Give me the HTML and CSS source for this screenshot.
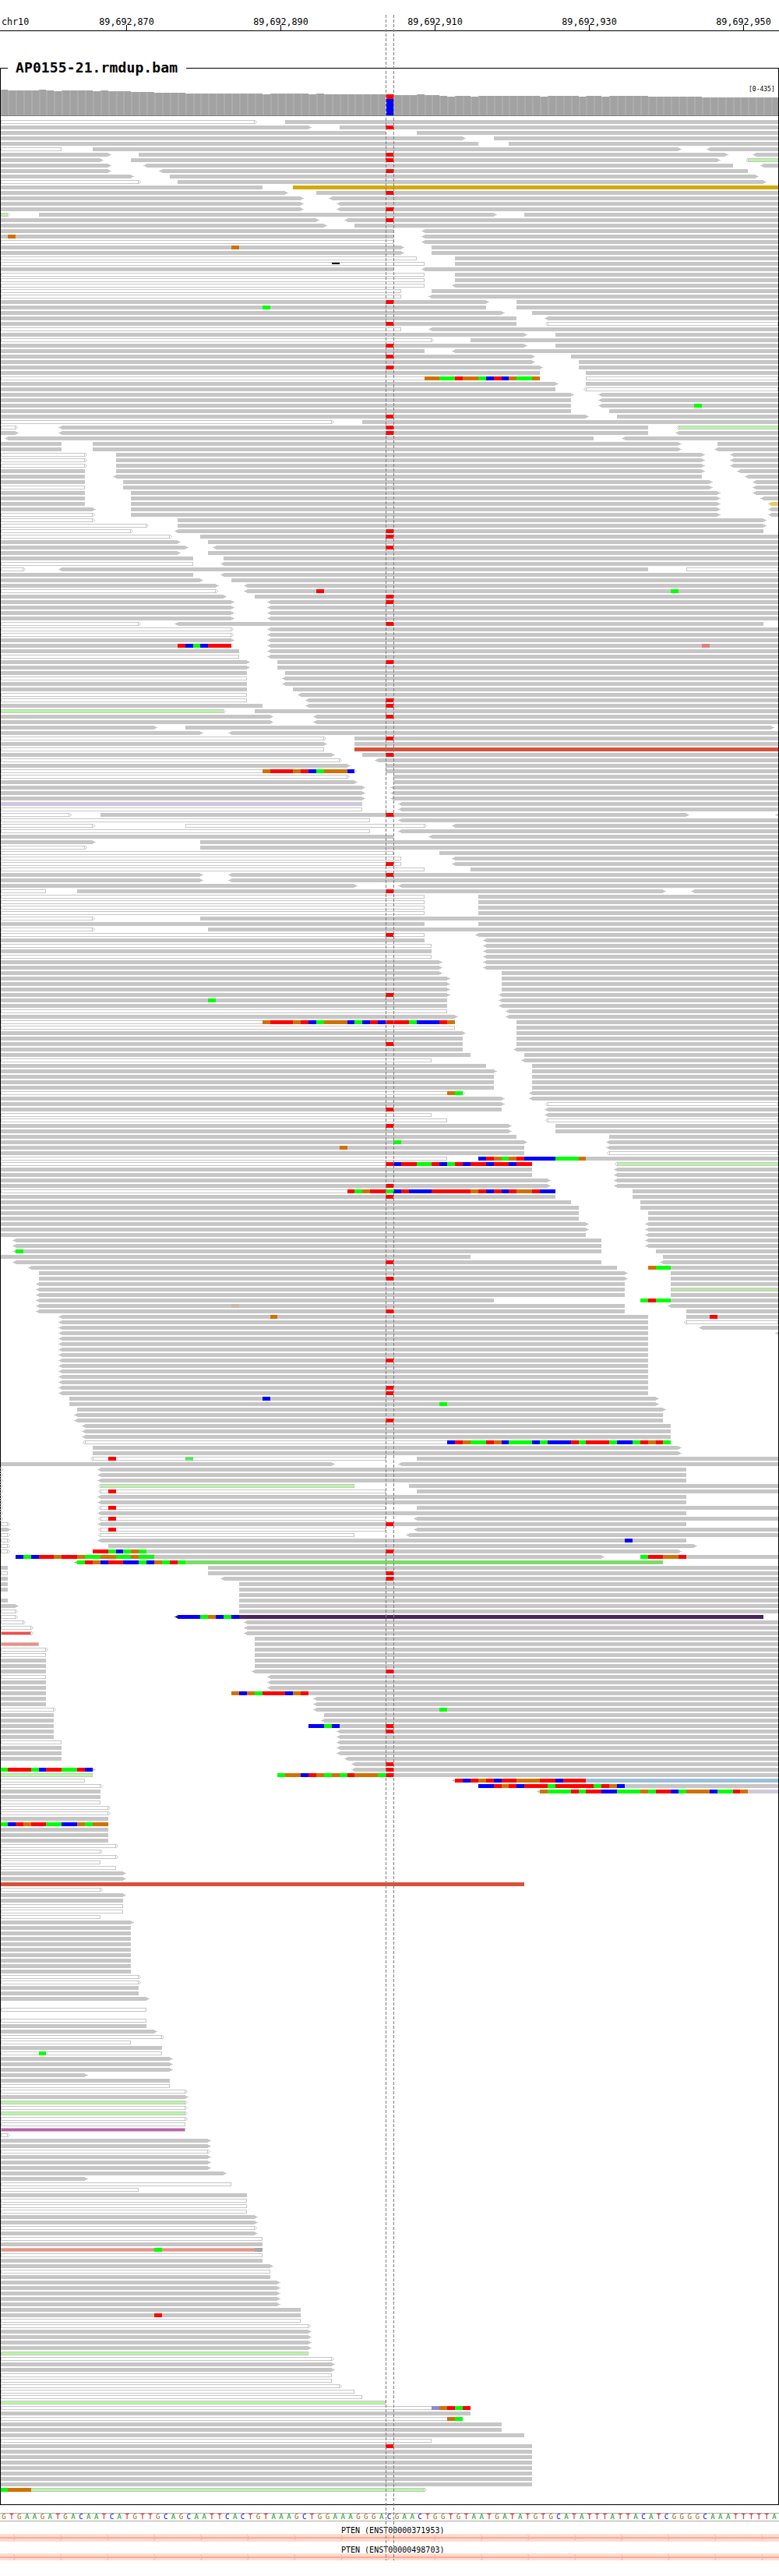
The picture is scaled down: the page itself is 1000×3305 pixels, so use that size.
FILE: index.html
```html
<!DOCTYPE html>
<html lang="en">
<head>
  <meta charset="UTF-8" />
  <title>IGV snapshot chr10</title>
  <link rel="stylesheet" href="styles.css">
</head>
<body>
  <div class="igv">
    <svg class="ruler" width="1000" height="40">
      <text x="2" y="32">chr10</text>
      <text class="pos" x="162.5" y="32">89,692,870</text>
      <text class="pos" x="360.5" y="32">89,692,890</text>
      <text class="pos" x="558.5" y="32">89,692,910</text>
      <text class="pos" x="756.5" y="32">89,692,930</text>
      <text class="pos" x="954.5" y="32">89,692,950</text>
      <path d="M162.5 32V39M360.5 32V39M558.5 32V39M756.5 32V39M954.5 32V39" stroke="#000" />
      <rect x="0" y="39" width="1000" height="1" />
    </svg>

    <div class="track">
      <div class="track-name">AP0155-21.rmdup.bam</div>
      <svg id="reads" class="reads" width="1000" height="3125"></svg>
    </div>

    <div id="seq" class="seq"></div>

    <div class="gene">
      <div class="gene-name">PTEN (ENST00000371953)</div>
      <svg class="band" width="1000" height="10">
        <defs>
          <pattern id="strand" width="60" height="10" patternUnits="userSpaceOnUse" x="0">
            <path d="M17.5 1.5L20 5L17.5 8.5" fill="none" stroke="#ffa898" />
          </pattern>
        </defs>
        <rect width="1000" height="10" fill="#ffdccf" />
        <rect y="4" width="1000" height="2" fill="#ffa898" />
        <rect width="1000" height="10" fill="url(#strand)" />
      </svg>
    </div>
    <div class="gene">
      <div class="gene-name">PTEN (ENST00000498703)</div>
      <svg class="band" width="1000" height="9">
        <rect width="1000" height="9" fill="#ffdccf" />
        <rect y="4" width="1000" height="2" fill="#ffa898" />
        <rect width="1000" height="9" fill="url(#strand)" />
      </svg>
    </div>

    <svg class="roi" width="1000" height="3305">
      <path d="M495.5 19V3285M505.5 19V3285" />
    </svg>
  </div>

  <script src="reads.js"></script>
</body>
</html>
```

FILE: styles.css
```css
html, body {
  margin: 0;
  background: #fff;
}
.igv {
  position: relative;
  width: 1000px;
  height: 3305px;
  overflow: hidden;
  font-family: "DejaVu Sans Mono", monospace;
}
svg {
  display: block;
}
.ruler text {
  font-size: 11.7px;
}
.ruler .pos {
  text-anchor: middle;
}
.track {
  position: relative;
  margin-top: 47px;
  height: 3125px;
  border: 1px solid #000;
}
.track-name {
  position: absolute;
  left: 9px;
  top: -12px;
  padding: 0 11px 0 10px;
  background: #fff;
  font-size: 18px;
  font-weight: bold;
  letter-spacing: 0.12px;
  line-height: 22px;
}
.reads {
  margin-left: -1px;
  shape-rendering: crispEdges;
}
.reads text {
  font-size: 8px;
  shape-rendering: auto;
}
.seq {
  display: grid;
  grid-template-columns: repeat(101, 9.9px);
  margin-top: 10px;
  height: 9px;
  border-top: 1px solid #aaa;
  border-bottom: 1px solid #aaa;
  font-size: 9px;
  line-height: 9px;
  text-align: center;
}
.base-A { color: #009600; }
.base-C { color: #0000c8; }
.base-G { color: #a0640a; }
.base-T { color: #dc0000; }
.gene {
  font-size: 10px;
  line-height: 12px;
}
.gene-name {
  margin-top: 6px;
  height: 10px;
  padding-left: 438px;
}
.gene + .gene .gene-name {
  margin-top: 5px;
}
.roi {
  position: absolute;
  left: 0;
  top: 0;
  pointer-events: none;
}
.roi path {
  stroke: #808080;
  stroke-dasharray: 4 2;
  fill: none;
}
```

FILE: reads.js
```js
// one line per alignment row, top to bottom, positions are base numbers in the window
// "<s-e>x" read (arrow on strand side, x = style letter), "50GAT" mismatch bases, "*" = 50T
const ROWS = `
0-33>o 37-101
0-40> 44-101 *
0-50 54-101
0-60> 64-101
0-62 66-101
0-8o 12-88> <92-101
0-14> 18-94> <98-101 *
0-13> 17-93> <97-101p *
0-14> <19-95 <99-101
0-14> <21-97 *
0-17> 22-98>
0-18>o 23-99>
0-34 38-101y
0-37> 41-101 *
0-39> <43-101
0-39> <44-101
0-39> <44-101 *
0-1>p 5-64> 68-101
0-41> <45-101 *
0-42> 46-101
0-51 <55-101
0-51 <55-101 1G
0-51o <55-101
0-52> 56-101 30G
0-52> 56-101
0-54o 59-101
0-55o 59-101 43D
0-51 <55-101
0-55o 59-101
0-55o 59-101
0-55o <59-101
0-52o 56-101
0-52o <56-101
0-63> 67-101 *
0-63 67-101 34A
0-65> 69-101
0-67 <71-101
0-67 <71-101o *
0-52o <56-101
0-68> 72-101
0-56>o 61-101
0-68> 72-101 *
0-55 <59-101
0-69> 74-101 *
0-69> 75-101
0-70> 75-101 *
0-70 76-101
0-70o 76-101o 55GGAATGGACTCGAAG
0-72> 76-101
0-72 <76-101o
0-74> <78-101
0-74 <78-101
0-74 <78-101 90A
0-74 79-101
0-76> 80-101 *
0-43>o 47-101
0-2>o <8-84 <88-101p *
0-2> <8-84 <88-101 *
<1-77 <81-101
0-8 12-88> 93-101
0-8 12-88> <93-101
0-11>o 15-91> <95-101
0-11>o 15-91> <95-101
0-11>o 15-91> <95-101
0-11 15-91> <96-101
0-11 <15-91 <97-101
0-11 16-92> <98-101
0-11o 16-92> <98-101
0-11 17-93> <98-101
0-11 17-93> <99-101
0-11 17-93> <100-101h
0-12> 17-93> <100-101
0-12>o 17-93> <100-101
0-12>o 23-99>
0-19>o 23-99>
0-17>o <23-99 *
0-22>o 26-101 *
0-23> 27-101
0-24> <28-101 *
0-23> 27-101
0-25 29-101
0-25o <29-101
0-3>o <8-84 89-101o
0-25 <29-101
0-26> 30-101
0-28> <32-101
0-28>o <32-101 41T 87A
0-29> 33-101 *
0-30> <35-101 *
0-30> <35-101
0-30> <35-101
0-30> <35-101
0-18>o <23-99 *
0-30>o <35-101
0-30>o <35-101
0-30> <35-101
0-30 23TCACTTT <35-101 91W
0-31 <35-101
0-31o <35-101
0-32> 36-101 *
0-32> 36-101
0-32 37-101
0-32o <37-101
0-32 <37-101
0-32 38-101
0-32o <39-101
0-32o <40-101 *
0-34 <40-101 *
0-29>p 33-101
0-35> <41-101 *
0-35> <41-101
0-20> 24-100>
0-26> <30-101
0-42>o 46-101 *
0-42> 46-101
0-42o 46-101r
0-43> 47-101 *
0-44>o <49-101
0-45> 50-101
0-46>o 34GTTTGTCAGGGC 50-101
0-45>o 51-101
0-46> 51-101
0-47> <51-101
0-47> <51-101
0-47> <51-101
0-47l <52-101
0-47o <52-101
0-9>o 13-89> <101-101 *
0-48o <52-101
0-12>o 24-55>o <59-101
0-48o <52-101
0-51 <56-101
0-12> 26-101
0-11>o 26-101
0-51o 57-101
0-52o <59-101
0-52o <59-101 *
0-55o 61-101
0-26> <30-101 *
0-26> <30-101
0-46> <52-101
0-6o 10-86> <90-101 *
0-55o 62-101
0-55o 62-101
0-55o 62-101
0-55o 62-101
0-12>o 26-101
0-55 62-101
0-12>o 27-101
0-55o <62-101 *
0-55 <63-101
0-56o <63-101
0-56 <63-101
0-56o <63-101
0-57> <63-101
0-57> <63-101
0-57> 65-101
0-58> 65-101
0-58> 65-101
0-58> 65-101
0-58> <65-101 *
0-58 <65-101 27A
0-58 <65-101
0-58o <66-101
0-59> <66-101
0-59o 34GTTTGTCAGGGCACTCTTTACCCTG 67-101
0-59o 67-101
0-60> 67-101
0-60 67-101
0-60 67-101 *
0-60 <67-101
0-61 68-101
0-56o <68-101
0-63 69-101
0-64> 69-101
0-64 69-101
0-64 69-101
0-64 69-101
0-60>o 58GA <69-101
0-65> <69-101
0-65> <71-101o
0-65 <71-101 *
0-56o <71-101
0-58o <71-101o
0-66> 72-101 *
0-66> 72-101
0-67 79-101
0-68> <79-101 51A
0-68 <79-101 44G
0-68 <79-101o
0-58o 62-101 62CTGAGTCCCCAAAG
0-69o 50TCTTAATCATCTTCTTCTT <80-101p
0-69 <80-101
0-69 <80-101
0-71> <80-101
0-71> <80-101 *
0-72o 45TAGTTACTCCCTTTTTGTCTCTGGTCC 82-101
0-72 * 82-101
0-74 83-101
0-75 83-101
0-75 84-101
0-75 84-101
0-76> <84-101
0-76> <84-101
0-76 <84-101
<2-78 <84-101
<2-78 <84-101
<2-78 85-101 2A
0-61 86-101
<2-78 <86-101 *
<4-80 84-101 84GAA
5-81> 87-101
5-81> 87-101 *
<5-81 87-101
<5-81 87-101d
<5-81 87-101
<5-64 83-101 83ATAA
<5-81 <87-101 30Y
<5-81 89-101 *
<8-84 89-101 35G 92T
<8-84 <89-101o
<8-84 <91-101
<8-84 <101-101
<8-84
<8-84
<8-84
<8-84
<8-84 *
<8-84
<8-84
<8-84
<8-84
<8-84 *
<8-84 *
9-85> 34C
9-85> 57A
10-86>
<10-86
<10-86 *
<11-87
<11-87
<11-87
<11-87o 58CTGAATGCAAACACCCTATTTACCATGTA
12-88>
12-88>
<12-50o 14T 24E 54-101
0-43> <52-101
0-0>o <13-89
0-0>o <13-89
0-0>o <13-89
0-0>o <13-46p 53-101
0-0>o <13-50o 14T 54-101
0-0>o <13-89
0-0>o <13-89
0-0>o <13-50o 14T 54-101
0-0>o <13-89
0-0>o <13-50o 14T <54-101
0-1>o <13-89 *
0-1> <13-50o 14T <54-101
0-1>o <13-46o <53-101
0-1>o <13-89 81C
0-1>o 14-90>
0-1>o 12-88> 12TTACAGA *
2-78> 2CACTTGTTGAAGGAAGAA 83-101 83ATTGGT
<10-86e 10ATGCTTCCACGATA
0-1 27-101
0-1o 27-101 *
0-1 <29-101 *
0-1 31-101
0-1 31-101
31-101
0-1 31-101
0-2> 31-101
0-2>o 31-101
0-2>o <23-99u 23CCCAGCAC
0-3>o <32-101
0-4>o <32-101
0-4>f <32-101
33-101
0-5s 33-101
0-6>o 33-101
0-6o 33-101
0-6 33-101
0-6 33-101
0-6 <33-101 *
0-6o <35-101
0-6 <35-101
0-6 <35-101
0-6 30-101 30GCGATTTCGT
0-6 <41-101
0-6 <41-101
0-7>o <41-101 57A
0-7 42-101
0-7 <42-101
0-7 40-101 40CCAC *
0-7 <44-101 *
0-7 <44-101
0-8o <44-101
0-8 <44-101
0-8 <44-101
0-8 <45-101
<46-101 *
0-12> 0ATTTACTTAATC <46-101 *
0-12p 36-101 36AGGCTGAGATGGGAT
0-11o <59-76 76-101k 59TCTGTCTTGGGTTCTTT
0-13>o 62-101 62CCTGTCTTTATTTTTATGC
0-13 <70-97 97-101l 70GAAATATTCCAAAGATTCAGGGCAATG
0-13
0-13o
0-14>o
0-14>o
0-14
0-14 0ACTGTTAACCGAGG
0-14
0-14
0-14
0-15>o
0-13>o
0-15>o
0-13o
0-15o
0-16>
0-16>
0-68r
0-13>o
0-16>
0-16
0-16o
0-16o
0-13o
0-17>
0-17
0-17
0-17
0-17
0-17
0-17
0-17
0-17
0-17
0-18>o
0-18>o
0-18
0-18
0-19>

0-19o

0-19o
0-19
0-20>
0-21>o
0-17o
0-21
0-21o 5A
0-22>
0-22>
0-22>
0-11>
0-22
0-22o
0-24>o
0-24>
0-24>p
0-24>o
0-24>p
0-24>o
0-24o
0-24m
0-1>o
0-27>
0-27>
0-27>o
0-27>
0-27>
0-27>
0-29>
0-11>
0-30o
0-18o
0-32
0-32o
0-32o
0-32o
0-33>
0-33>
0-33>o
0-33>
0-34o
0-34
0-34s 20A 33X
0-34o
0-34
0-35>
0-35o
0-35
0-36>
0-36>
0-36>
0-36>
0-36>
0-39
0-39 20T
0-39o
0-40>o
0-40>
0-40>
0-40>
0-40>
0-40p
0-43>o
0-43>
0-43>
0-43o
0-43o
0-44>o
0-46o
0-47o
0-50p
0-61o 56VGTAT
0-61
0-60o 58GA
0-65
0-65
0-68
0-56o
0-69 *
0-69
0-69
0-69
0-69
0-69
0-69
0-69
0-55>p 0AGGG
`.split("\n").slice(1, -1);

const COVERAGE = [[115,1],[116,4],[115,1],[116,1],[117,1],[116,4],[117,1],[116,1],[117,3],[118,3],[119,4],
  [120,10],[121,1],[120,5],[121,1],[120,1],[121,9],[122,3],[121,1],[122,2],[123,1],[124,1],[123,2],[124,1],
  [123,8],[124,1],[123,4],[124,1],[123,2],[124,1],[123,5],[124,7],[125,10]];

const BASE = 9.9, TOP = 88, ROW_H = 7;

const READ_STYLE = {
  "": { fill: "#c6c6c6" },
  o: { fill: "#fff", stroke: "#c6c6c6" },
  p: { fill: "#b6f7a2", stroke: "#c6c6c6" },
  d: { fill: "#bfe3a5", stroke: "#c6c6c6" },
  s: { fill: "#ff8a78", stroke: "#c6c6c6" },
  f: { fill: "#ff4848", stroke: "#c6c6c6" },
  m: { fill: "#c85ab4", stroke: "#c6c6c6" },
  y: { fill: "#d4a900" },
  r: { fill: "#d8513a" },
  u: { fill: "#47245f" },
  l: { fill: "#cfc8dd" },
  k: { fill: "#9bbfd8" },
  e: { fill: "#7bdc6a" },
  h: { fill: "#e8c86a" },
};

const BASE_COLOR = {
  A: "#00ff00", C: "#0000ff", G: "#d17105", T: "#ff0000",
  V: "#8a8ad8", W: "#e07f7f", X: "#a8a8a8", Y: "#ccb8a8", E: "#66e066",
};

function px(k) {
  return Math.min(999, Math.max(1, Math.round(k * BASE)));
}

function rect(x, y, w, h, fill, extra) {
  return `<rect x="${x}" y="${y}" width="${w}" height="${h}" fill="${fill}"${extra || ""}/>`;
}

function drawRead(m, y) {
  const style = READ_STYLE[m[5]];
  const x1 = px(+m[2]), x2 = px(+m[3]);
  const line = style.stroke ? style.stroke : style.fill;
  let out = "";

  if (x2 > x1) {
    if (style.stroke) {
      out += rect(x1 + 0.5, y + 0.5, x2 - x1 - 1, 4, style.fill, ` stroke="${style.stroke}"`);
    } else {
      out += rect(x1, y, x2 - x1, 5, style.fill);
    }
  }
  if (m[4] && x2 < 999) {
    out += style.stroke
      ? `<path d="M${x2 - 0.5} ${y}L${x2 + 2.5} ${y + 2.5}L${x2 - 0.5} ${y + 5}" fill="none" stroke="${line}"/>`
      : rect(x2, y + 1, 2, 3, line) + rect(x2 + 2, y + 2, 2, 1, line);
  }
  if (m[1] && x1 > 1) {
    out += style.stroke
      ? `<path d="M${x1 + 0.5} ${y}L${x1 - 2.5} ${y + 2.5}L${x1 + 0.5} ${y + 5}" fill="none" stroke="${line}"/>`
      : rect(x1 - 2, y + 1, 2, 3, line) + rect(x1 - 4, y + 2, 2, 1, line);
  }
  return out;
}

function drawMismatches(start, bases, y) {
  let out = "";
  [...bases].forEach((b, i) => {
    const x1 = px(start + i), x2 = px(start + i + 1);
    out += b === "D" ? rect(x1, y + 1, x2 - x1, 2, "#000") : rect(x1, y, x2 - x1, 5, BASE_COLOR[b]);
  });
  return out;
}

function drawCoverage() {
  let out = "", k = 0;
  COVERAGE.forEach(([top, n]) => {
    for (let i = 0; i < n; i++, k++) {
      const x1 = px(k), x2 = px(k + 1), y = top - TOP;
      if (k === 50) {
        out += rect(x1 + 1, y, x2 - x1 - 1, 6, "#ff0000") + rect(x1 + 1, y + 6, x2 - x1 - 1, 148 - top - 6, "#0000ff");
      } else {
        out += rect(x1, y, x2 - x1, 148 - top, "#a2a2a2") + rect(x1, y, 2, 148 - top, "#acacac");
      }
    }
  });
  out += rect(1, 148 - TOP, 998, 1, "#808080");
  out += `<text x="961" y="${117 - TOP}">[0-435]</text>`;
  return out;
}

function drawRows() {
  let reads = "", marks = "";
  ROWS.forEach((row, n) => {
    const y = 154 + n * ROW_H - TOP;
    row.split(" ").filter(Boolean).forEach(tok => {
      if (tok === "*") { marks += drawMismatches(50, "T", y); return; }
      const read = tok.match(/^(<?)(\d+)-(\d+)(>?)([a-z]?)$/);
      if (read) { reads += drawRead(read, y); return; }
      const mm = tok.match(/^(\d+)([A-Z]+)$/);
      marks += drawMismatches(+mm[1], mm[2], y);
    });
  });
  return reads + marks;
}

function drawSequence() {
  const seq = "GTGAAGATGACAATCATGTTGCAGCAATTCACTGTAAAGCTGGAAAGGGACGAACTGGTGTAATGATATGTGCATATTTATTACATCGGGGCAAATTTTTA";
  document.getElementById("seq").innerHTML = [...seq].map(b => `<span class="base-${b}">${b}</span>`).join("");
}

document.getElementById("reads").innerHTML = drawCoverage() + drawRows();
drawSequence();
```
